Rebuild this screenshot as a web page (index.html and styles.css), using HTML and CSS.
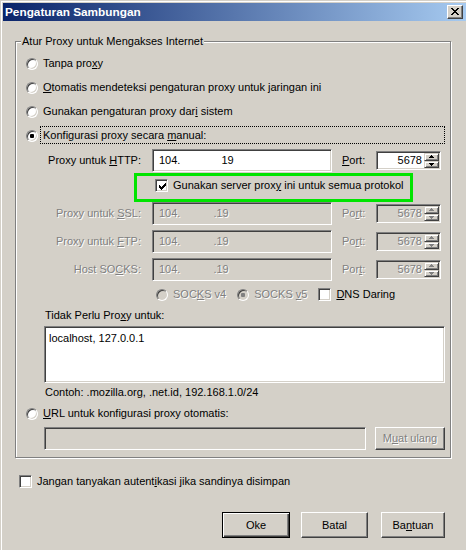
FILE: index.html
```html
<!DOCTYPE html>
<html lang="id">
<head>
<meta charset="utf-8">
<title>Pengaturan Sambungan</title>
<link rel="stylesheet" href="styles.css">
</head>
<body>
<div class="window">
  <div class="window-inner">
    <div class="titlebar">
      <span class="title">Pengaturan Sambungan</span>
      <span class="close-btn">
        <svg width="8" height="7" viewBox="0 0 8 7" shape-rendering="crispEdges"><path fill="#000" d="M0 0h2v1H0z M6 0h2v1H6z M1 1h2v1H1z M5 1h2v1H5z M2 2h4v1H2z M3 3h2v1H3z M2 4h4v1H2z M1 5h2v1H1z M5 5h2v1H5z M0 6h2v1H0z M6 6h2v1H6z"/></svg>
      </span>
    </div>

    <div class="client">
      <div class="group">
        <span class="group-title">Atur Proxy untuk Mengakses Internet</span>

        <div class="option"><span class="radio"></span><span class="opt-label">Tanpa pro<u>x</u>y</span></div>
        <div class="option"><span class="radio"></span><span class="opt-label"><u>O</u>tomatis mendeteksi pengaturan proxy untuk jaringan ini</span></div>
        <div class="option"><span class="radio"></span><span class="opt-label">Gunakan pengaturan proxy dar<u>i</u> sistem</span></div>
        <div class="option"><span class="radio checked"></span><span class="opt-label focused">Konfigurasi proxy secara <u>m</u>anual:</span></div>

        <div class="manual">
          <div class="proxy-row first">
            <span class="field-label">Proxy untuk <u>H</u>TTP:</span>
            <span class="field host"><span>104.</span><span class="host-tail">19</span></span>
            <span class="port-label"><u>P</u>ort:</span>
            <span class="spin">
              <span class="spin-value">5678</span>
              <span class="spin-btns">
                <span class="spin-btn"><svg width="5" height="3" viewBox="0 0 5 3" shape-rendering="crispEdges"><path class="arrow" d="M2 0h1v1H2z M1 1h3v1H1z M0 2h5v1H0z"/></svg></span>
                <span class="spin-btn"><svg width="5" height="3" viewBox="0 0 5 3" shape-rendering="crispEdges"><path class="arrow" d="M0 0h5v1H0z M1 1h3v1H1z M2 2h1v1H2z"/></svg></span>
              </span>
            </span>
          </div>

          <div class="share-row">
            <span class="share-box">
              <span class="check checked"><svg width="7" height="7" viewBox="0 0 7 7" shape-rendering="crispEdges"><path fill="#000" d="M0 2h1v3H0z M1 3h1v3H1z M2 4h1v3H2z M3 3h1v3H3z M4 2h1v3H4z M5 1h1v3H5z M6 0h1v3H6z"/></svg></span>
              <span>Gunakan server prox<u>y</u> ini untuk semua protokol</span>
            </span>
          </div>

          <div class="proxy-row disabled">
            <span class="field-label">Proxy untuk <u>S</u>SL:</span>
            <span class="field host"><span>104.</span><span class="host-tail dot">.19</span></span>
            <span class="port-label">Po<u>r</u>t:</span>
            <span class="spin">
              <span class="spin-value">5678</span>
              <span class="spin-btns">
                <span class="spin-btn"><svg width="5" height="3" viewBox="0 0 5 3" shape-rendering="crispEdges"><path class="arrow" d="M2 0h1v1H2z M1 1h3v1H1z M0 2h5v1H0z"/></svg></span>
                <span class="spin-btn"><svg width="5" height="3" viewBox="0 0 5 3" shape-rendering="crispEdges"><path class="arrow" d="M0 0h5v1H0z M1 1h3v1H1z M2 2h1v1H2z"/></svg></span>
              </span>
            </span>
          </div>

          <div class="proxy-row disabled spaced">
            <span class="field-label">Proxy untuk <u>F</u>TP:</span>
            <span class="field host"><span>104.</span><span class="host-tail dot">.19</span></span>
            <span class="port-label">Po<u>r</u>t:</span>
            <span class="spin">
              <span class="spin-value">5678</span>
              <span class="spin-btns">
                <span class="spin-btn"><svg width="5" height="3" viewBox="0 0 5 3" shape-rendering="crispEdges"><path class="arrow" d="M2 0h1v1H2z M1 1h3v1H1z M0 2h5v1H0z"/></svg></span>
                <span class="spin-btn"><svg width="5" height="3" viewBox="0 0 5 3" shape-rendering="crispEdges"><path class="arrow" d="M0 0h5v1H0z M1 1h3v1H1z M2 2h1v1H2z"/></svg></span>
              </span>
            </span>
          </div>

          <div class="proxy-row disabled spaced">
            <span class="field-label">Host SO<u>C</u>KS:</span>
            <span class="field host"><span>104.</span><span class="host-tail dot">.19</span></span>
            <span class="port-label">Por<u>t</u>:</span>
            <span class="spin">
              <span class="spin-value">5678</span>
              <span class="spin-btns">
                <span class="spin-btn"><svg width="5" height="3" viewBox="0 0 5 3" shape-rendering="crispEdges"><path class="arrow" d="M2 0h1v1H2z M1 1h3v1H1z M0 2h5v1H0z"/></svg></span>
                <span class="spin-btn"><svg width="5" height="3" viewBox="0 0 5 3" shape-rendering="crispEdges"><path class="arrow" d="M0 0h5v1H0z M1 1h3v1H1z M2 2h1v1H2z"/></svg></span>
              </span>
            </span>
          </div>

          <div class="socks-row">
            <span class="socks-item disabled"><span class="radio"></span><span>SOC<u>K</u>S v4</span></span>
            <span class="socks-item disabled"><span class="radio checked"></span><span>SOCKS <u>v</u>5</span></span>
            <span class="socks-item"><span class="check"></span><span><u>D</u>NS Daring</span></span>
          </div>

          <div class="noproxy-label">Tidak Perlu Pro<u>x</u>y untuk:</div>
          <div class="textarea">localhost, 127.0.0.1</div>
          <div class="hint">Contoh: .mozilla.org, .net.id, 192.168.1.0/24</div>
        </div>

        <div class="option url-option"><span class="radio"></span><span class="opt-label"><u>U</u>RL untuk konfigurasi proxy otomatis:</span></div>
        <div class="url-row">
          <span class="field url-field"></span>
          <span class="button disabled">M<u>u</u>at ulang</span>
        </div>
      </div>

      <div class="auth-row">
        <span class="check"></span>
        <span>Jangan tanyakan autent<u>i</u>kasi jika sandinya disimpan</span>
      </div>

      <div class="actions">
        <span class="button default">Oke</span>
        <span class="button">Batal</span>
        <span class="button">Ba<u>n</u>tuan</span>
      </div>
    </div>
  </div>
</div>
</body>
</html>
```

FILE: styles.css
```css
* {
  box-sizing: border-box;
}

html,
body {
  margin: 0;
  padding: 0;
}

body {
  width: 466px;
  height: 550px;
  overflow: hidden;
  background: #d4d0c8;
  font-family: "Liberation Sans", Arial, sans-serif;
  font-size: 11px;
  line-height: 13px;
  color: #000;
}

u {
  text-decoration: underline;
  text-underline-offset: 1px;
}

/* ---------- window frame ---------- */

.window {
  height: 550px;
  border-top: 1px solid #d4d0c8;
  border-left: 1px solid #d4d0c8;
}

.window-inner {
  height: 100%;
  border-top: 1px solid #fff;
  border-left: 1px solid #fff;
  padding: 1px 0 0 1px;
}

.titlebar {
  height: 18px;
  display: flex;
  align-items: center;
  justify-content: space-between;
  padding: 0 3px 0 2px;
  background: linear-gradient(to right, #0a246a, #a6caf0);
}

.title {
  color: #fff;
  font-weight: bold;
  font-size: 11.8px;
  line-height: 18px;
}

.close-btn {
  width: 16px;
  height: 14px;
  display: flex;
  align-items: center;
  justify-content: center;
  background: #d4d0c8;
  border: 1px solid;
  border-color: #fff #404040 #404040 #fff;
  box-shadow: inset -1px -1px 0 #808080;
  padding-bottom: 1px;
}

.close-btn svg {
  display: block;
}

/* ---------- common controls ---------- */

.radio {
  flex: none;
  width: 12px;
  height: 12px;
  border-radius: 50%;
  border: 1px solid;
  border-color: #808080 #fff #fff #808080;
  background: #fff;
  box-shadow: inset 1px 1px 0 #404040, inset -1px -1px 0 #d4d0c8;
  display: flex;
  align-items: center;
  justify-content: center;
}

.radio.checked::after {
  content: "";
  width: 4px;
  height: 4px;
  border-radius: 1px;
  background: #000;
}

.disabled .radio {
  background: #d4d0c8;
}

.disabled .radio.checked::after {
  background: #808080;
}

.check {
  flex: none;
  width: 13px;
  height: 13px;
  border: 1px solid;
  border-color: #808080 #fff #fff #808080;
  background: #fff;
  box-shadow: inset 1px 1px 0 #404040, inset -1px -1px 0 #d4d0c8;
  padding: 2px;
}

.check svg {
  display: block;
  margin: 1px 0 0 1px;
}

.field {
  display: flex;
  align-items: center;
  border: 1px solid;
  border-color: #808080 #fff #fff #808080;
  box-shadow: inset 1px 1px 0 #404040, inset -1px -1px 0 #d4d0c8;
  background: #fff;
  white-space: nowrap;
}

.button {
  display: flex;
  align-items: center;
  justify-content: center;
  background: #d4d0c8;
  border: 1px solid;
  border-color: #fff #404040 #404040 #fff;
  box-shadow: inset -1px -1px 0 #808080;
}

.button.default {
  border-color: #000;
  box-shadow: inset 1px 1px 0 #fff, inset -1px -1px 0 #404040, inset -2px -2px 0 #808080;
}

.disabled,
.button.disabled {
  color: #808080;
  text-shadow: 1px 1px 0 #fff;
}

/* ---------- group box ---------- */

.group {
  position: relative;
  margin: 20px 0 0 12px;
  width: 436px;
  border: 1px solid #808080;
  box-shadow: inset 1px 1px 0 #fff, 1px 1px 0 #fff;
  padding: 12px 5px 7px 10px;
}

.group-title {
  position: absolute;
  top: -7px;
  left: 5px;
  padding: 0 1px;
  background: #d4d0c8;
  white-space: nowrap;
}

.option {
  display: flex;
  align-items: flex-start;
  height: 18px;
  margin-bottom: 6px;
}

.option .radio {
  margin-top: 4px;
}

.opt-label {
  flex: 1;
  margin-left: 2px;
  padding: 2px 2px 1px;
  border: 1px dotted transparent;
  white-space: nowrap;
}

.opt-label.focused {
  border-color: #000;
}

/* ---------- manual proxy grid ---------- */

.manual {
  margin: -1px 0 0 18px;
}

.proxy-row {
  display: grid;
  grid-template-columns: 108px 180px 44px 65px;
  align-items: center;
  height: 23px;
}

.proxy-row.spaced {
  margin-top: 5px;
}

.field-label {
  text-align: right;
  padding-right: 11px;
  white-space: nowrap;
}

.port-label {
  padding-left: 10px;
}

.field.host {
  height: 23px;
  padding-left: 6px;
}

.disabled .field,
.disabled .spin {
  background: #d4d0c8;
}

.host-tail {
  margin-left: 41px;
}

.host-tail.dot {
  margin-left: 33px;
}

.spin {
  height: 19px;
  display: flex;
  border: 1px solid;
  border-color: #808080 #fff #fff #808080;
  box-shadow: inset 1px 1px 0 #404040, inset -1px -1px 0 #d4d0c8;
  background: #fff;
  padding: 1px;
}

.spin-value {
  flex: 1;
  text-align: right;
  padding-right: 2px;
  align-self: center;
}

.spin-btns {
  width: 15px;
  display: flex;
  flex-direction: column;
}

.spin-btn {
  flex: 1;
  display: flex;
  align-items: center;
  justify-content: center;
  background: #d4d0c8;
  border: 1px solid;
  border-color: #d4d0c8 #404040 #404040 #d4d0c8;
  box-shadow: inset 1px 1px 0 #fff, inset -1px -1px 0 #808080;
}

.spin-btn svg {
  display: block;
}

.arrow {
  fill: #000;
}

.disabled .arrow {
  fill: #808080;
}

.share-row {
  margin-top: 1px;
}

.share-box {
  display: flex;
  align-items: flex-start;
  width: 279px;
  height: 29px;
  margin-left: 90px;
  border: 3px solid #00e400;
  padding: 3px 0 0 18px;
}

.share-box .check {
  margin-right: 5px;
}

.share-box > span:last-child {
  white-space: nowrap;
}

.socks-row {
  display: flex;
  align-items: center;
  height: 13px;
  margin: 7px 0 0 112px;
}

.socks-item {
  display: flex;
  align-items: center;
  white-space: nowrap;
  margin-right: 11px;
}

.socks-item .radio {
  margin-right: 5px;
}

.socks-item .check {
  margin-right: 5px;
}

.noproxy-label {
  margin: 8px 0 0 1px;
}

.textarea {
  width: 401px;
  height: 57px;
  margin-top: 4px;
  border: 1px solid;
  border-color: #808080 #fff #fff #808080;
  box-shadow: inset 1px 1px 0 #404040, inset -1px -1px 0 #d4d0c8;
  background: #fff;
  padding: 5px 4px;
}

.hint {
  margin: 3px 0 0 1px;
}

.url-option {
  margin-top: 5px;
}

.url-row {
  display: flex;
  margin-left: 18px;
  height: 23px;
  margin-top: -1px;
}

.url-field {
  width: 322px;
  background: #d4d0c8;
}

.url-row .button {
  width: 70px;
  margin-left: 9px;
}

/* ---------- below the group ---------- */

.auth-row {
  display: flex;
  align-items: center;
  margin: 17px 0 0 16px;
  white-space: nowrap;
}

.auth-row .check {
  margin-right: 5px;
}

.actions {
  display: flex;
  justify-content: flex-end;
  gap: 11px;
  margin: 24px 21px 0 0;
}

.actions .button {
  height: 26px;
  width: 67px;
}

.actions .button.default {
  width: 68px;
}

.actions .button:last-child {
  width: 64px;
  margin-left: 2px;
}
```
